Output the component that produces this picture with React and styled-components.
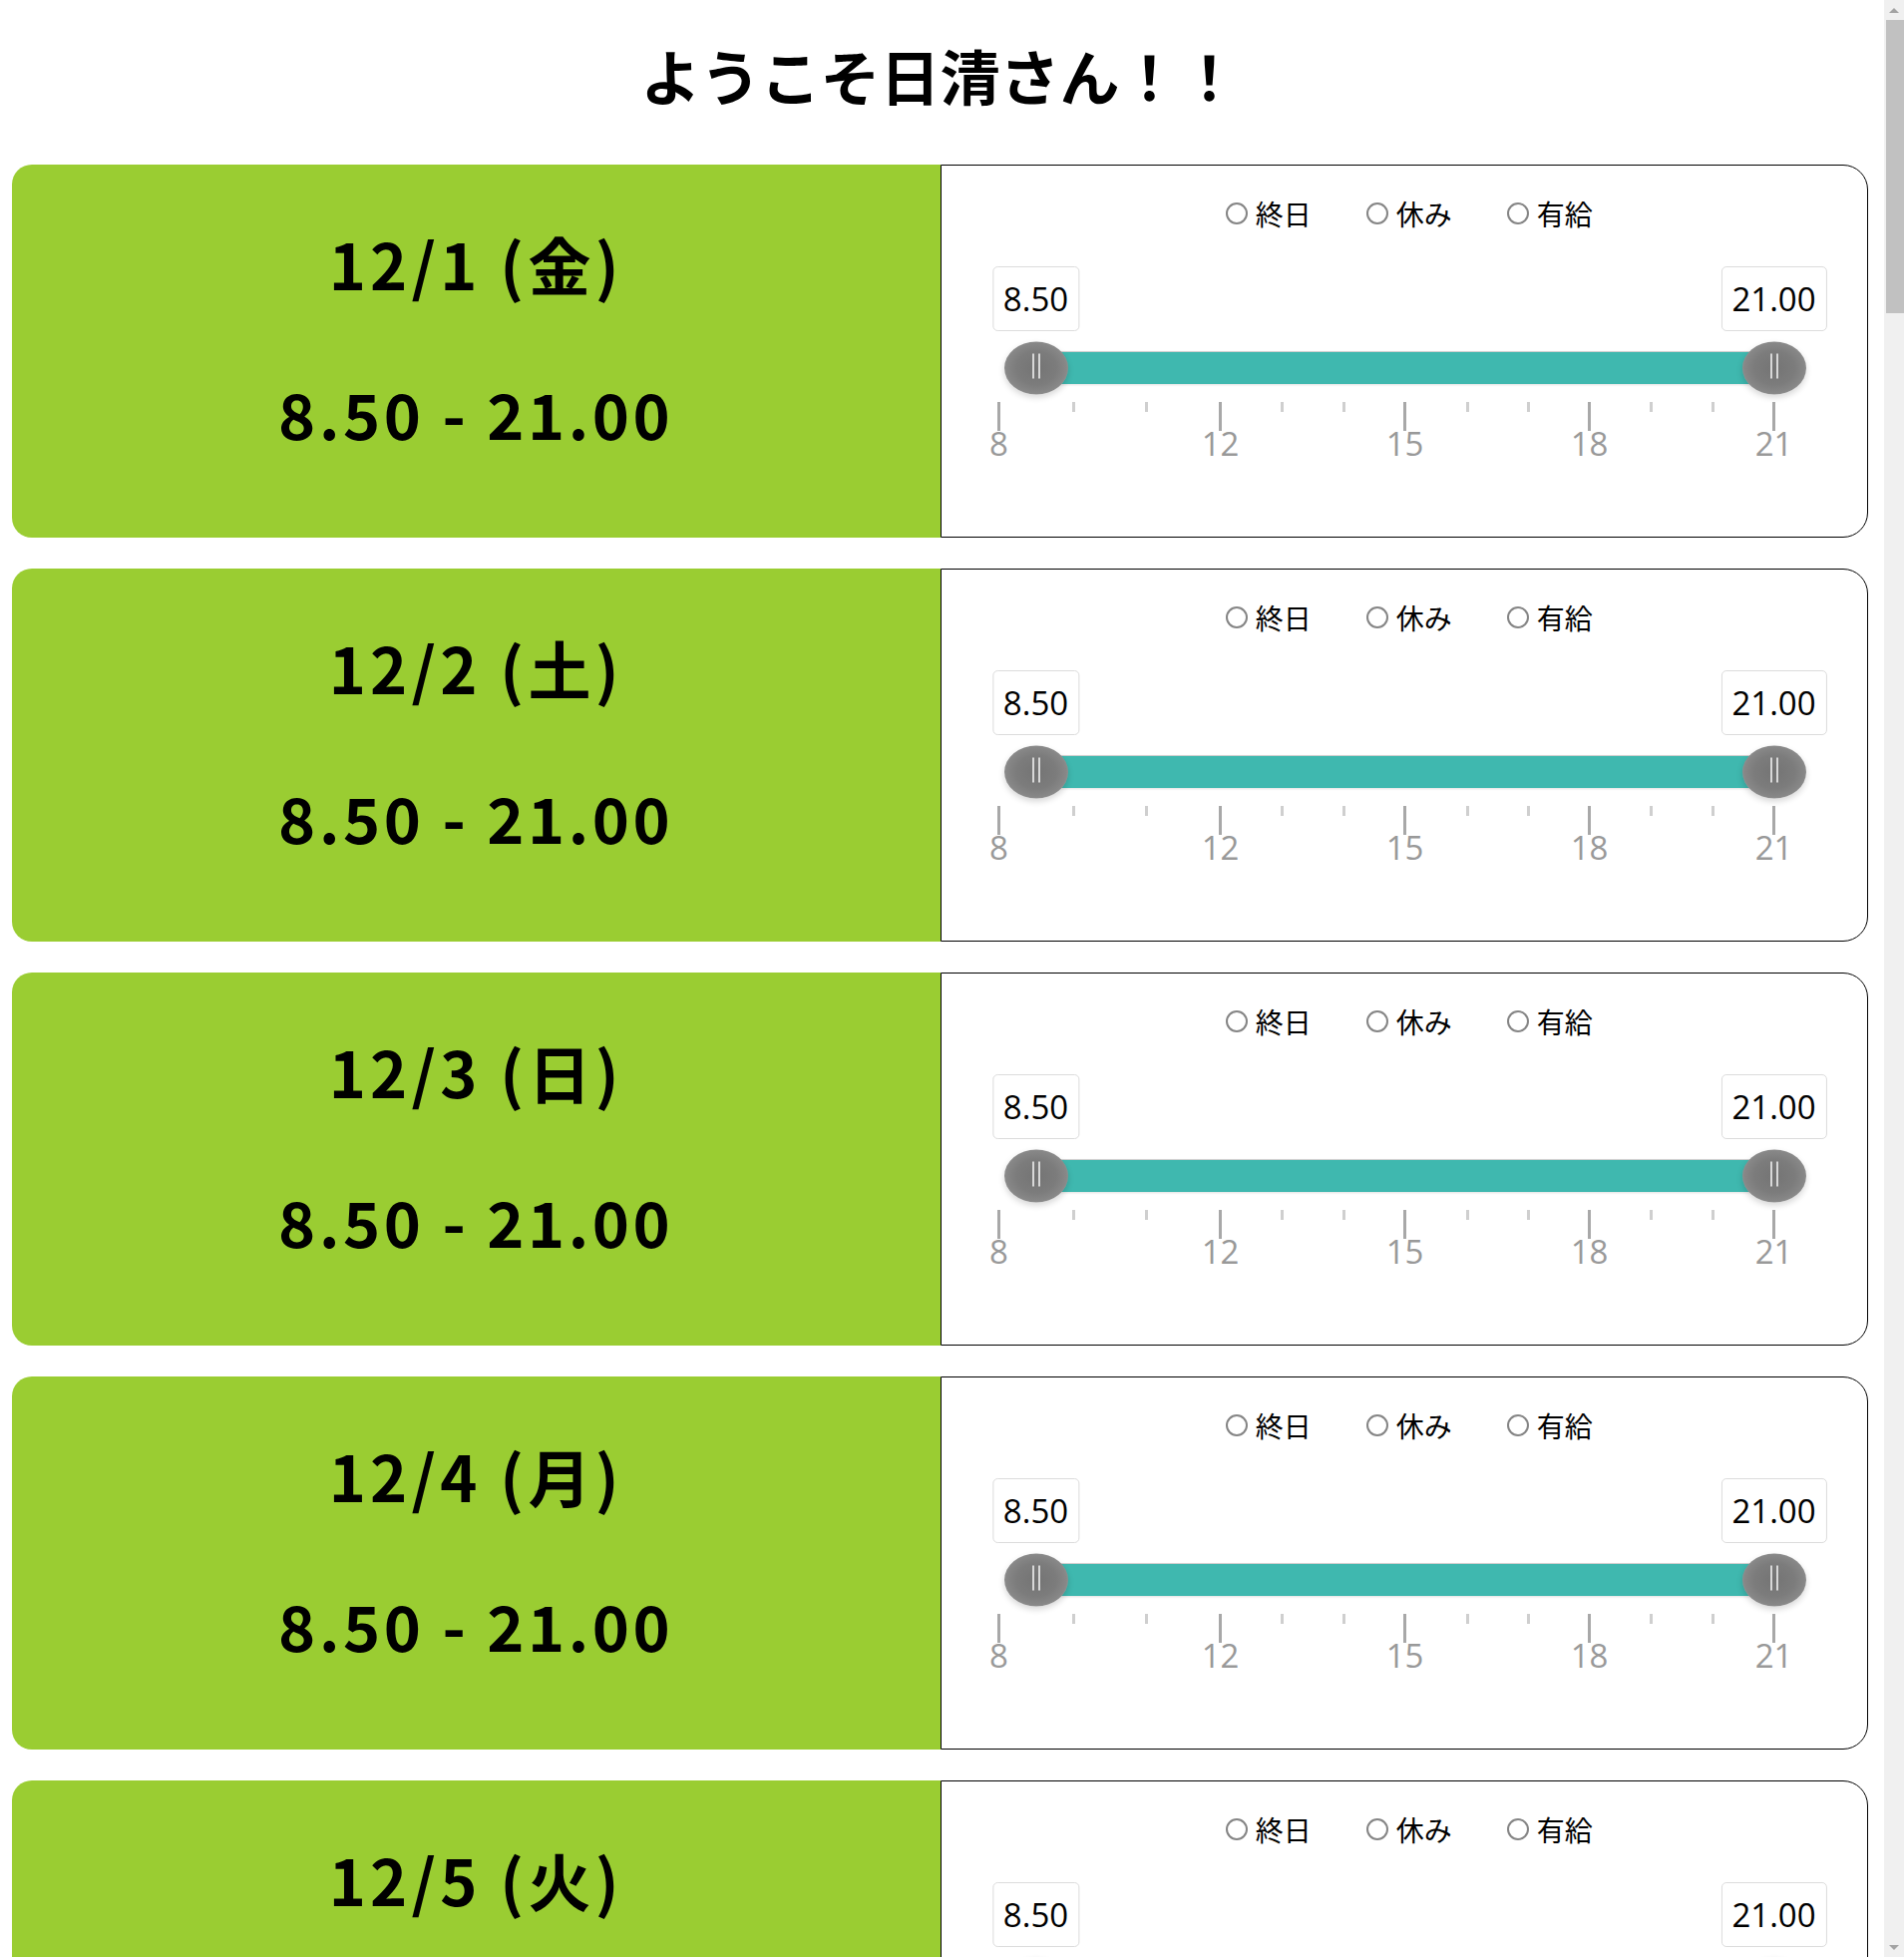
import styled, { createGlobalStyle } from "styled-components";

const GlobalStyle = createGlobalStyle`
  html, body {
    margin: 0;
    background: #fff;
    overflow: hidden;
  }
  body {
    font-family: "Noto Sans CJK JP", sans-serif;
    color: #000;
  }
`;

const WEEK = ["日", "月", "火", "水", "木", "金", "土"];

const MIN = 8.5;
const MAX = 21;
const THUMB_FROM = 38;
const THUMB_SPAN = 740;

const BIG_TICKS = [
  { at: 0, label: "8" },
  { at: 222, label: "12" },
  { at: 407, label: "15" },
  { at: 592, label: "18" },
  { at: 777, label: "21" },
];
const SMALL_TICKS = [75, 148, 284, 346, 470, 531, 654, 716];

const OPTIONS = ["終日", "休み", "有給"];

const days = Array.from({ length: 31 }, (_, i) => {
  const d = i + 1;
  return {
    id: d,
    label: `12/${d} (${WEEK[new Date(2023, 11, d).getDay()]})`,
    start: 8.5,
    end: 21,
  };
});

const fmt = (v) => v.toFixed(2);
const toX = (v) => THUMB_FROM + ((v - MIN) / (MAX - MIN)) * THUMB_SPAN;

const Viewport = styled.div`
  display: flex;
  height: 100vh;
`;

const Page = styled.main`
  flex: 1;
  overflow: hidden;
  padding: 0 16px 40px 12px;
`;

// window scrollbar, as the browser drew it in the capture
const ScrollTrack = styled.div`
  width: 20px;
  flex-shrink: 0;
  background: #f0f0f0;
  display: flex;
  flex-direction: column;
  align-items: flex-end;
`;

const ScrollArrow = styled.div`
  width: 20px;
  height: 20px;
  display: flex;
  align-items: center;
  justify-content: center;

  &::before {
    content: "";
    border-left: 5px solid transparent;
    border-right: 5px solid transparent;
    ${(p) =>
      p.$down
        ? "border-top: 5px solid #a3a3a3;"
        : "border-bottom: 5px solid #a3a3a3;"}
  }
`;

const ScrollThumb = styled.div`
  width: 18px;
  height: 294px;
  background: #c1c1c1;
`;

const ScrollRest = styled.div`
  flex: 1;
`;

const Header = styled.header`
  height: 150px;
  margin-bottom: 15px;
  display: flex;
  align-items: center;
  justify-content: center;
`;

const Title = styled.h1`
  margin: 0;
  font-size: 60px;
  font-weight: 700;
  line-height: 1.2;
`;

const List = styled.div`
  display: flex;
  flex-direction: column;
  gap: 31px;
`;

const Card = styled.section`
  display: grid;
  grid-template-columns: 1fr 1fr;
  height: 374px;
`;

const DatePanel = styled.div`
  background: #9acd32;
  border-radius: 20px 0 0 20px;
  display: flex;
  flex-direction: column;
  align-items: center;
  justify-content: center;
  gap: 78px;
  padding-bottom: 27px;
`;

const BigLine = styled.div`
  font-family: "Noto Sans CJK JP", sans-serif;
  font-size: 63px;
  font-weight: 700;
  line-height: 72px;
  letter-spacing: ${(p) => p.$spacing}px;
  white-space: nowrap;
`;

const ControlPanel = styled.div`
  border: 1px solid #000;
  border-radius: 0 25px 25px 0;
  display: flex;
  flex-direction: column;
  padding-top: 33px;
`;

const RadioRow = styled.div`
  display: flex;
  justify-content: center;
  gap: 55px;
  height: 30px;
  padding-left: 10px;
`;

const RadioLabel = styled.label`
  display: inline-flex;
  align-items: center;
  gap: 8px;
  font-size: 28px;
  line-height: 30px;
`;

const Radio = styled.input.attrs({ type: "radio" })`
  appearance: none;
  margin: 0;
  width: 22px;
  height: 22px;
  border: 2px solid #858585;
  border-radius: 50%;
  background: #fff;
`;

const Slider = styled.div`
  margin: 38px 95px 0 57px;
  display: flex;
  flex-direction: column;
`;

const ValueRow = styled.div`
  position: relative;
  height: 65px;
`;

const ValueBox = styled.div`
  position: absolute;
  top: 0;
  transform: translateX(-50%);
  height: 63px;
  padding: 0 10px;
  border: 1px solid #dcdcdc;
  border-radius: 5px;
  background: #fff;
  font-family: "Open Sans", sans-serif;
  font-size: 33px;
  line-height: 63px;
  white-space: nowrap;
`;

const TrackRow = styled.div`
  position: relative;
  height: 33px;
  margin-top: 20px;
`;

const Bar = styled.div`
  position: absolute;
  top: 0;
  height: 32px;
  background: #3fb8af;
  border-top: 1px solid #d0d0d0;
  box-shadow: 0 1px 2px rgba(0, 0, 0, 0.12);
`;

const Thumb = styled.div`
  position: absolute;
  top: 50%;
  width: 64px;
  height: 53px;
  transform: translate(-50%, -50%);
  border-radius: 50%;
  background: radial-gradient(
    ellipse at center,
    #747474 0%,
    #7c7c7c 45%,
    #878787 66%,
    #9c9c9c 82%,
    rgba(205, 205, 205, 0.7) 100%
  );
  box-shadow: 0 3px 6px rgba(0, 0, 0, 0.16);
  display: flex;
  justify-content: center;
  align-items: center;
  gap: 4px;
  padding-bottom: 3px;
  box-sizing: border-box;
`;

const Grip = styled.span`
  width: 2px;
  height: 25px;
  background: #d8d8d8;
`;

const Scale = styled.div`
  position: relative;
  height: 60px;
  margin-top: 18px;
`;

const Tick = styled.span`
  position: absolute;
  top: 0;
  width: 3px;
  margin-left: -1px;
  height: ${(p) => (p.$big ? "29px" : "10px")};
  background: ${(p) => (p.$big ? "#a8a8a8" : "#cfcfcf")};
`;

const TickLabel = styled.span`
  position: absolute;
  top: 25px;
  transform: translateX(-50%);
  font-family: "Open Sans", sans-serif;
  font-size: 33px;
  line-height: 1;
  color: #999;
`;

function RangeSlider({ start, end }) {
  const a = toX(start);
  const b = toX(end);
  return (
    <Slider>
      <ValueRow>
        <ValueBox style={{ left: a }}>{fmt(start)}</ValueBox>
        <ValueBox style={{ left: b }}>{fmt(end)}</ValueBox>
      </ValueRow>
      <TrackRow>
        <Bar style={{ left: a, width: b - a }} />
        <Thumb style={{ left: a }}>
          <Grip />
          <Grip />
        </Thumb>
        <Thumb style={{ left: b }}>
          <Grip />
          <Grip />
        </Thumb>
      </TrackRow>
      <Scale>
        {SMALL_TICKS.map((x) => (
          <Tick key={x} style={{ left: x }} />
        ))}
        {BIG_TICKS.map((t) => (
          <Tick key={t.label} $big style={{ left: t.at }} />
        ))}
        {BIG_TICKS.map((t) => (
          <TickLabel key={t.label} style={{ left: t.at + 1 }}>
            {t.label}
          </TickLabel>
        ))}
      </Scale>
    </Slider>
  );
}

function DayCard({ day }) {
  return (
    <Card>
      <DatePanel>
        <BigLine $spacing={4.3}>{day.label}</BigLine>
        <BigLine $spacing={3.6}>
          {fmt(day.start)} - {fmt(day.end)}
        </BigLine>
      </DatePanel>
      <ControlPanel>
        <RadioRow>
          {OPTIONS.map((o) => (
            <RadioLabel key={o}>
              <Radio name={`kind-${day.id}`} value={o} />
              {o}
            </RadioLabel>
          ))}
        </RadioRow>
        <RangeSlider start={day.start} end={day.end} />
      </ControlPanel>
    </Card>
  );
}

export default function App() {
  return (
    <Viewport>
      <GlobalStyle />
      <Page>
        <Header>
          <Title>ようこそ日清さん！！</Title>
        </Header>
        <List>
          {days.map((d) => (
            <DayCard key={d.id} day={d} />
          ))}
        </List>
      </Page>
      <ScrollTrack>
        <ScrollArrow />
        <ScrollThumb />
        <ScrollRest />
        <ScrollArrow $down />
      </ScrollTrack>
    </Viewport>
  );
}
